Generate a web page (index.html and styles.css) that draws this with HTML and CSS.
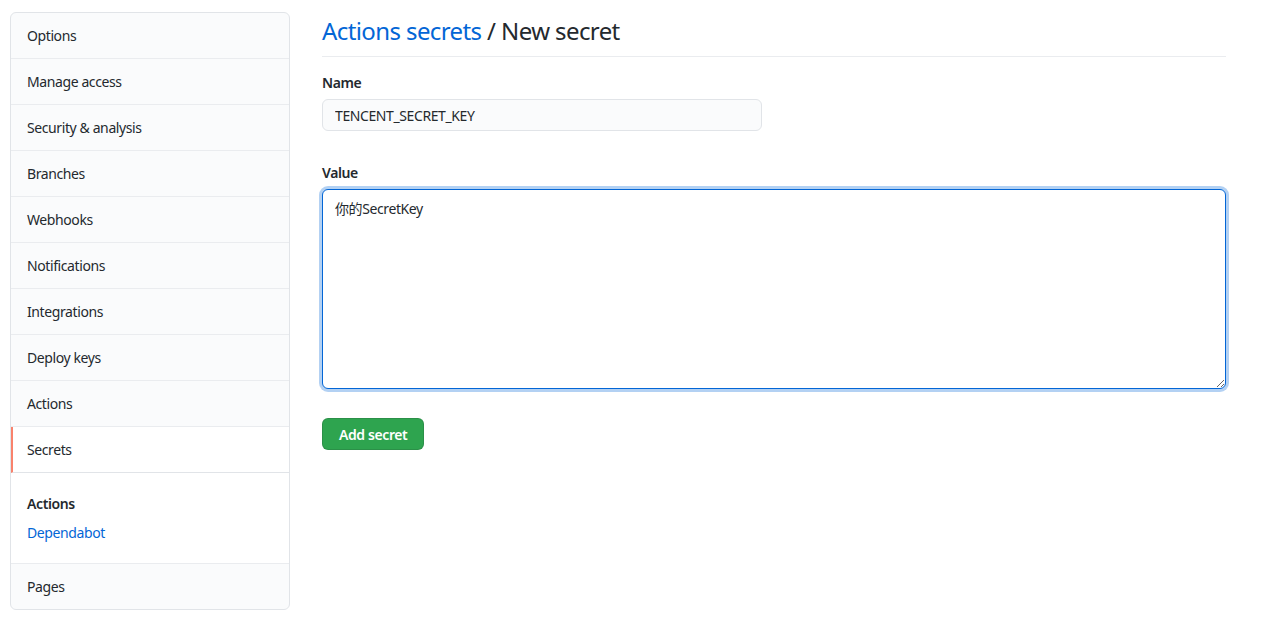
FILE: index.html
```html
<!DOCTYPE html>
<html lang="en">
<head>
<meta charset="utf-8">
<title>Actions secrets / New secret</title>
<link rel="stylesheet" href="styles.css">
</head>
<body>
<div class="layout">
  <nav class="sidebar">
    <a class="menu-item" href="#">Options</a>
    <a class="menu-item" href="#">Manage access</a>
    <a class="menu-item" href="#">Security &amp; analysis</a>
    <a class="menu-item" href="#">Branches</a>
    <a class="menu-item" href="#">Webhooks</a>
    <a class="menu-item" href="#">Notifications</a>
    <a class="menu-item" href="#">Integrations</a>
    <a class="menu-item" href="#">Deploy keys</a>
    <a class="menu-item" href="#">Actions</a>
    <a class="menu-item selected" href="#">Secrets</a>
    <div class="menu-section">
      <div class="menu-heading">Actions</div>
      <a class="menu-link" href="#">Dependabot</a>
    </div>
    <a class="menu-item last" href="#">Pages</a>
  </nav>
  <main class="main">
    <div class="subhead">
      <h2 class="subhead-heading"><a class="crumb" href="#">Actions secrets</a> / New secret</h2>
    </div>
    <form class="form">
      <div class="form-group">
        <label class="form-label" for="name">Name</label>
        <input class="form-input" id="name" type="text" value="TENCENT_SECRET_KEY">
      </div>
      <div class="form-group value-group">
        <label class="form-label" for="value">Value</label>
        <textarea class="form-textarea" id="value">你的SecretKey</textarea>
      </div>
      <button class="btn-primary" type="button">Add secret</button>
    </form>
  </main>
</div>
</body>
</html>
```
FILE: styles.css
```css
* { box-sizing: border-box; }
html, body { margin: 0; padding: 0; background: #fff; }
body {
  font-family: "Noto Sans", "Noto Sans CJK SC", sans-serif;
  font-size: 14px;
  line-height: 1.5;
  letter-spacing: -0.4px;
  color: #24292e;
}
a { text-decoration: none; }

.layout {
  display: flex;
  gap: 32px;
  padding: 12px 36px 0 10px;
  align-items: flex-start;
}

.sidebar {
  width: 280px;
  flex: 0 0 280px;
  display: flex;
  flex-direction: column;
  border: 1px solid #e1e4e8;
  border-radius: 6px;
  background: #fafbfc;
  overflow: hidden;
}
.menu-item {
  display: block;
  padding: 12px 16px;
  height: 46px;
  color: #24292e;
  border-bottom: 1px solid #eaecef;
}
.menu-item.last { border-bottom: 0; height: 45px; }
.menu-item.selected {
  background: #fff;
  border-left: 2px solid #f9826c;
  padding-left: 14px;
  border-bottom-color: #e1e4e8;
}
.menu-section {
  background: #fff;
  padding: 20px 16px 20px;
  border-bottom: 1px solid #eaecef;
  display: flex;
  flex-direction: column;
  gap: 8px;
}
.menu-heading { font-weight: 600; }
.menu-link { color: #0366d6; }

.main { flex: 1; min-width: 0; }
.subhead {
  border-bottom: 1px solid #eaecef;
  padding-top: 2px;
  padding-bottom: 8px;
  margin-bottom: 15px;
}
.subhead-heading {
  margin: 0;
  font-size: 24px;
  font-weight: 400;
  line-height: 34px;
  letter-spacing: -0.6px;
}
.crumb { color: #0366d6; }

.form { display: flex; flex-direction: column; align-items: flex-start; }
.form-group { display: flex; flex-direction: column; width: 100%; }
.value-group { margin-top: 31px; }
.form-label {
  font-weight: 600;
  margin-bottom: 6px;
}
.form-input {
  width: 440px;
  height: 32px;
  padding: 5px 12px;
  font: inherit;
  letter-spacing: inherit;
  color: #24292e;
  background: #fafbfc;
  border: 1px solid #e1e4e8;
  border-radius: 6px;
  outline: none;
}
.form-textarea {
  width: 100%;
  height: 200px;
  padding: 8px 12px;
  font: inherit;
  letter-spacing: inherit;
  color: #24292e;
  background: #fff;
  border: 1px solid #0366d6;
  border-radius: 6px;
  box-shadow: 0 0 0 3px rgba(3, 102, 214, 0.3);
  outline: none;
  resize: vertical;
}
.btn-primary {
  margin-top: 29px;
  height: 32px;
  padding: 0 16px;
  font: inherit;
  font-weight: 600;
  letter-spacing: inherit;
  color: #fff;
  background: #2ea44f;
  border: 1px solid rgba(27, 31, 35, 0.15);
  border-radius: 6px;
  cursor: pointer;
}
```
